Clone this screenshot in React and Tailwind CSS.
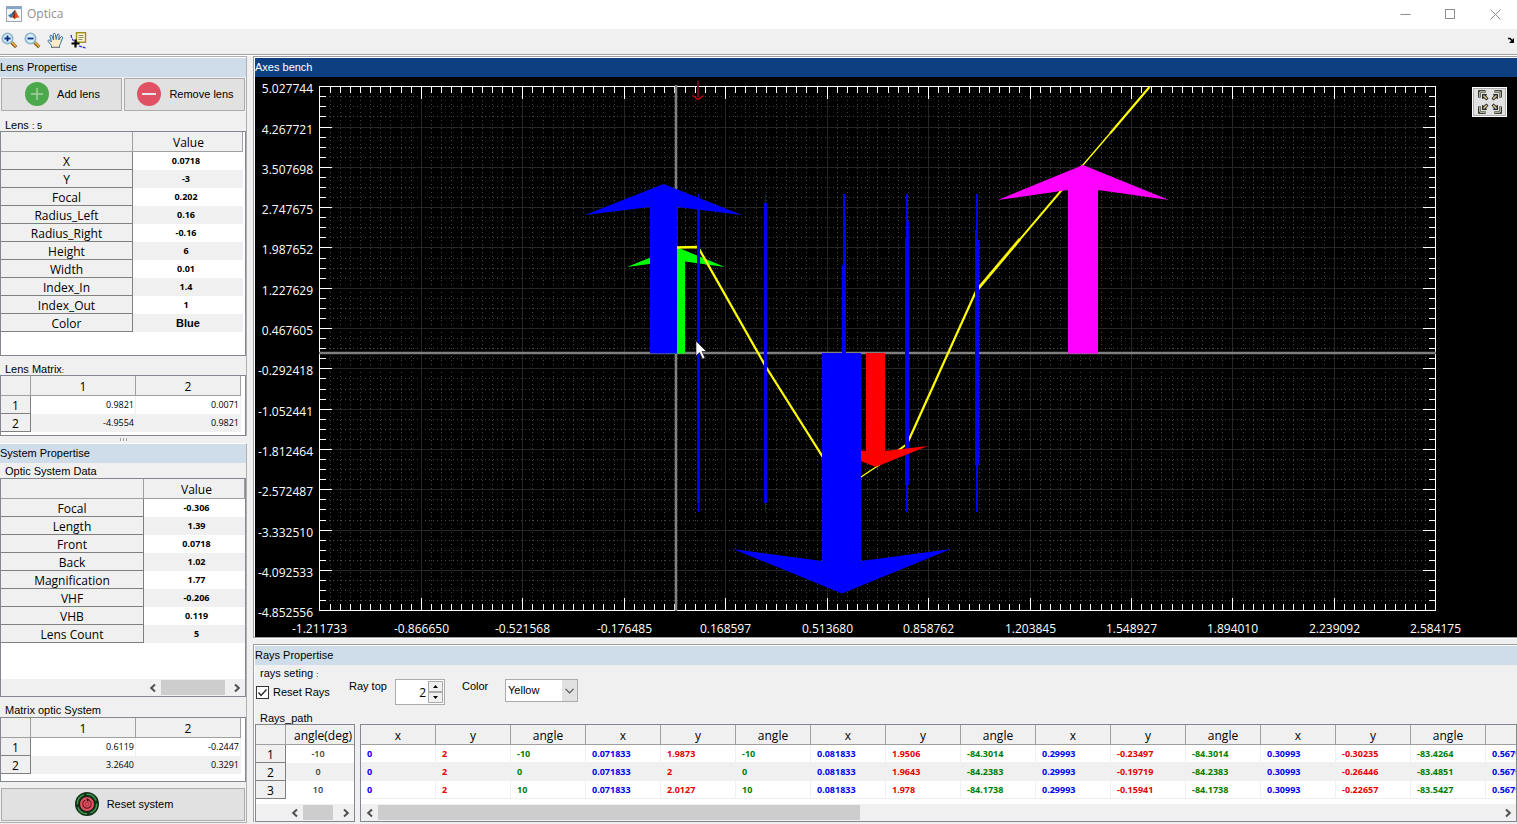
import React, { useState } from "react";

const lensRows = [
  ["X", "0.0718"],
  ["Y", "-3"],
  ["Focal", "0.202"],
  ["Radius_Left", "0.16"],
  ["Radius_Right", "-0.16"],
  ["Height", "6"],
  ["Width", "0.01"],
  ["Index_In", "1.4"],
  ["Index_Out", "1"],
  ["Color", "Blue"],
];

const systemRows = [
  ["Focal", "-0.306"],
  ["Length", "1.39"],
  ["Front", "0.0718"],
  ["Back", "1.02"],
  ["Magnification", "1.77"],
  ["VHF", "-0.206"],
  ["VHB", "0.119"],
  ["Lens Count", "5"],
];

const lensMatrix = [
  ["0.9821", "0.0071"],
  ["-4.9554", "0.9821"],
];

const systemMatrix = [
  ["0.6119", "-0.2447"],
  ["3.2640", "0.3291"],
];

const rayAngles = ["-10", "0", "10"];

const rayRows = [
  ["0", "2", "-10", "0.071833", "1.9873", "-10", "0.081833", "1.9506", "-84.3014", "0.29993", "-0.23497", "-84.3014", "0.30993", "-0.30235", "-83.4264", "0.56799"],
  ["0", "2", "0", "0.071833", "2", "0", "0.081833", "1.9643", "-84.2383", "0.29993", "-0.19719", "-84.2383", "0.30993", "-0.26446", "-83.4851", "0.56799"],
  ["0", "2", "10", "0.071833", "2.0127", "10", "0.081833", "1.978", "-84.1738", "0.29993", "-0.15941", "-84.1738", "0.30993", "-0.22657", "-83.5427", "0.56799"],
];

const rayHeads = ["x", "y", "angle"];
const rayColors = ["text-[#0000f0]", "text-[#e60000]", "text-[#007d00]"];

const yLabels = ["5.027744", "4.267721", "3.507698", "2.747675", "1.987652", "1.227629", "0.467605", "-0.292418", "-1.052441", "-1.812464", "-2.572487", "-3.332510", "-4.092533", "-4.852556"];
const xLabels = ["-1.211733", "-0.866650", "-0.521568", "-0.176485", "0.168597", "0.513680", "0.858762", "1.203845", "1.548927", "1.894010", "2.239092", "2.584175"];

// shared cell styles
const headCell = "h-[20px] border-r border-b border-[#a0a0a0] bg-[#f0f0f0] pt-[2px] pr-0 pb-0 text-[12px] leading-[17px] font-normal";
const rowCell = "h-[18px] border-r border-b border-[#808080] bg-[#f0f0f0] px-0 pt-[2px] pb-0 text-center text-[12px] leading-[15px] font-normal";

const PanelTitle = ({ children, dark }) => (
  <h2
    className={`h-[19px] font-['Liberation_Sans',sans-serif] text-[11px] leading-[19px] ${
      dark ? "bg-[#0e3f81] text-white" : "bg-[#cfddea] text-black"
    }`}
  >
    {children}
  </h2>
);

const Chevron = ({ left }) => (
  <svg viewBox="0 0 8 10" className="h-[10px] w-[8px]" fill="none" stroke="#505050" strokeWidth="2">
    {left ? <path d="M6 1.5 L2.2 5 L6 8.5" /> : <path d="M2 1.5 L5.800 5 L2 8.5" />}
  </svg>
);

const ScrollBar = ({ thumb, name }) => (
  <div className="flex h-[17px] flex-1 items-center bg-[#f0f0f0]">
    <button aria-label={`${name} left`} className="flex h-full w-[17px] items-center justify-center">
      <Chevron left />
    </button>
    <div className="h-[15px] flex-1">
      <div className={`h-full bg-[#cdcdcd] ${thumb}`} />
    </div>
    <button aria-label={`${name} right`} className="flex h-full w-[17px] items-center justify-center">
      <Chevron />
    </button>
  </div>
);

const ValueTable = ({ rows, headWidth, pad, headPad }) => (
  <table className="w-full table-fixed border-separate border-spacing-0">
    <thead>
      <tr>
        <th className={`${headCell} ${headWidth} pl-0`}></th>
        <th className={`${headCell} ${headPad}`}>Value</th>
      </tr>
    </thead>
    <tbody>
      {rows.map(([name, value], i) => (
        <tr key={name} className={i % 2 ? "bg-[#f0f0f0]" : "bg-white"}>
          <th className={rowCell}>{name}</th>
          <td
            className={`h-[18px] py-0 text-center leading-[16px] font-bold ${
              name === "Color" ? "px-0 font-['Liberation_Sans',sans-serif] text-[11px]" : `text-[9px] ${pad}`
            }`}
          >
            {value}
          </td>
        </tr>
      ))}
    </tbody>
  </table>
);

const MatrixTable = ({ rows }) => (
  <table className="w-full table-fixed border-separate border-spacing-0">
    <thead>
      <tr>
        <th className={`${headCell} w-[30px] pl-0`}></th>
        <th className={`${headCell} pl-0`}>1</th>
        <th className={`${headCell} pl-0`}>2</th>
      </tr>
    </thead>
    <tbody>
      {rows.map((row, i) => (
        <tr key={i} className={i % 2 ? "bg-[#f0f0f0]" : "bg-white"}>
          <th className={rowCell}>{i + 1}</th>
          {row.map((v, j) => (
            <td key={j} className="h-[18px] border-r border-[#f0f0f0] py-0 pr-px pl-0 text-right text-[9px] leading-[16px]">
              {v}
            </td>
          ))}
        </tr>
      ))}
    </tbody>
  </table>
);

const TitleBar = () => (
  <header className="flex h-[29px] items-center bg-white pb-px">
    <svg viewBox="0 0 16 16" className="ml-[6px] h-4 w-4">
      <rect x="0.500" y="0.500" width="15" height="15" fill="#f4f6f8" stroke="#9aa7b5" />
      <rect x="1" y="1" width="14" height="2" fill="#7ea6cf" />
      <path d="M2 9.500 L5.500 7.500 L7.500 9.500 L5 12 Z" fill="#3a78a8" />
      <path d="M5.500 7.500 L9 3.800 L9.500 7 L7.500 10 Z" fill="#275274" />
      <path d="M9 3.800 C10.500 6 11.500 9.500 14 12 C12 11 10.500 11.500 8.500 13.500 C8 11.500 6.500 11 5 12 C7.500 10 8.200 6.500 9 3.800 Z" fill="#d9541e" />
      <path d="M9 4.500 C9.200 7 9 10 8.500 13 C7.800 11.500 7 11.300 6.500 11.300 C8 9.500 8.500 7 9 4.500 Z" fill="#7d1f12" />
    </svg>
    <h1 className="ml-[5px] flex-1 text-[12px] leading-[16px] text-[#8f8f8f]">Optica</h1>
    <button aria-label="Minimize" className="flex h-full w-[46px] items-center justify-center">
      <svg viewBox="0 0 11 11" className="h-[11px] w-[11px]" stroke="#8f8f8f" fill="none">
        <path d="M0.500 5.500 H10.500" />
      </svg>
    </button>
    <button aria-label="Maximize" className="flex h-full w-[45px] items-center justify-center">
      <svg viewBox="0 0 11 11" className="h-[11px] w-[11px]" stroke="#8f8f8f" fill="none">
        <rect x="0.500" y="0.500" width="9" height="9" />
      </svg>
    </button>
    <button aria-label="Close" className="flex h-full w-[44px] items-center justify-center">
      <svg viewBox="0 0 11 11" className="h-[11px] w-[11px]" stroke="#8f8f8f" fill="none">
        <path d="M0.500 0.500 L10.500 10.500 M10.500 0.500 L0.500 10.500" />
      </svg>
    </button>
  </header>
);

const Magnifier = ({ plus }) => (
  <svg viewBox="0 0 17 17" className="h-[17px] w-[17px]">
    <path d="M10.500 10.500 L15.200 15.200" stroke="#8a5a14" strokeWidth="3.200" />
    <path d="M10.800 10.300 L15 14.500" stroke="#eab54e" strokeWidth="1.600" />
    <circle cx="6.500" cy="6.500" r="5.200" fill="#d6eefa" stroke="#8fb4cc" strokeWidth="1.600" />
    <path d={plus ? "M3.500 6.500 H9.500 M6.500 3.500 V9.500" : "M3.500 6.500 H9.500"} stroke="#0a2f86" strokeWidth="1.800" />
  </svg>
);

const ToolBar = () => (
  <div className="flex h-[26px] items-center gap-[6px] border-b border-[#a0a0a0] pb-[3px] pl-px">
    <button aria-label="Zoom in">
      <Magnifier plus />
    </button>
    <button aria-label="Zoom out">
      <Magnifier />
    </button>
    <button aria-label="Pan">
      <svg viewBox="0 0 17 17" className="h-[17px] w-[17px]">
        <path
          d="M4.500 15.500 L4.500 13.500 L1.200 9.500 C0.500 8.300 2 7.500 3 8.500 L4.500 10 L3 4.500 C2.700 3 4.500 2.700 5 4 L6.500 8 L6.300 2.500 C6.300 1 8.200 1 8.400 2.400 L9.200 7.500 L10.300 2.800 C10.700 1.500 12.300 1.900 12.200 3.200 L11.800 8 L13.700 5 C14.500 4 16 4.700 15.500 6 L13.500 11.500 L12.500 13.500 L12.500 15.500 Z"
          fill="#fdebc8"
          stroke="#2f6ea5"
        />
        <path d="M5.500 15 H11.500" stroke="#d59b52" />
      </svg>
    </button>
    <button aria-label="Data cursor">
      <svg viewBox="0 0 17 17" className="h-[17px] w-[17px]">
        <path d="M1 3 L1.800 6 L3.500 9 M9 14 L15.500 16" stroke="#2020e0" strokeWidth="1.200" fill="none" strokeDasharray="3 1" />
        <rect x="6.500" y="0.700" width="9" height="9.500" fill="#fffbd0" stroke="#a58a1e" strokeWidth="1.400" />
        <path d="M8.500 3.500 H13.500 M8.500 5.500 H13.500 M8.500 7.500 H12.500" stroke="#8a8a70" />
        <path d="M5.500 7.500 V15.500 M1.500 11.500 H9.500" stroke="#000" strokeWidth="2.200" />
      </svg>
    </button>
    <div className="flex-1" />
    <button aria-label="Dock" className="mr-[2px]">
      <svg viewBox="0 0 8 7" className="h-[7px] w-[8px]">
        <path d="M1 1.500 H3 L6 4.500" stroke="#000" strokeWidth="1.600" fill="none" />
        <path d="M7 1 V6 H2 Z" fill="#000" />
      </svg>
    </button>
  </div>
);

const PushButton = ({ icon, children }) => (
  <button className="flex h-[33px] flex-1 items-center justify-center gap-2 border border-[#adadad] bg-[#e1e1e1] pl-[2px] font-['Liberation_Sans',sans-serif] text-[11px]">
    {icon}
    <span>{children}</span>
  </button>
);

const RoundIcon = ({ color, plus }) => (
  <svg viewBox="0 0 24 24" className="mb-px h-6 w-6">
    <circle cx="12" cy="12" r="12" fill={color} />
    <path d={plus ? "M6 12 H18 M12 6 V18" : "M5 12 H19"} stroke={plus ? "#a5cfa5" : "#e8e8e8"} strokeWidth={plus ? 1.5 : 2} />
  </svg>
);

const ResetIcon = () => (
  <svg viewBox="0 0 24 24" className="mb-px h-6 w-6" fill="none">
    <circle cx="12" cy="12" r="12" fill="#123018" />
    <circle cx="12" cy="12" r="9.700" stroke="#3f9a4c" strokeWidth="1.400" strokeDasharray="12 3" />
    <circle cx="12" cy="12" r="7.500" fill="#e35260" stroke="#0c2412" strokeWidth="1" />
    <circle cx="12" cy="12" r="4.200" stroke="#6d1c28" strokeWidth="1.200" strokeDasharray="22 4" transform="rotate(-60 12 12)" />
    <circle cx="12" cy="12" r="1.800" stroke="#a52a3a" strokeWidth="0.800" />
    <path d="M11.500 6 L14.500 7.800 L12 9.800 Z" fill="#2a0d12" />
  </svg>
);

const tickX = (k) => Math.floor(319.9 + k * 10.145) + 0.5;
const tickY = (k) => Math.floor(86.7 + k * 10.077) + 0.5;

const Bench = () => {
  const xs = Array.from({ length: 111 }, (_, k) => k);
  const ys = Array.from({ length: 53 }, (_, k) => k);
  const xTicks = xs
    .map((k) => {
      const len = k % 10 === 0 ? 12 : 6;
      return `M${tickX(k)} 87 v${len} M${tickX(k)} 610 v-${len}`;
    })
    .join(" ");
  const yTicks = ys
    .map((k) => {
      const len = k % 4 === 0 ? 12 : 6;
      return `M320 ${tickY(k)} h${len} M1435 ${tickY(k)} h-${len}`;
    })
    .join(" ");

  return (
    <svg viewBox="255 77 1262 560" className="block h-auto w-full bg-black" fill="none">
      {/* minor grid */}
      <g stroke="#444444" strokeDasharray="1 3" shapeRendering="crispEdges">
        {xs.filter((k) => k % 10).map((k) => (
          <path key={k} d={`M${tickX(k)} 88 V610`} />
        ))}
        {ys.filter((k) => k % 4).map((k) => (
          <path key={k} d={`M321 ${tickY(k)} H1435`} />
        ))}
      </g>
      {/* major grid */}
      <g stroke="#262626" shapeRendering="crispEdges">
        {xs.filter((k) => k % 10 === 0).map((k) => (
          <path key={k} d={`M${tickX(k)} 87 V610`} />
        ))}
        {ys.filter((k) => k % 4 === 0).map((k) => (
          <path key={k} d={`M320 ${tickY(k)} H1435`} />
        ))}
      </g>
      <g stroke="#fff" shapeRendering="crispEdges">
        <rect x="319.500" y="86.500" width="1116" height="524" />
        <path d={xTicks} />
        <path d={yTicks} />
      </g>
      <path d="M676 85 V611 M319 353 H1436" stroke="#808080" strokeWidth="2.500" />

      {/* object */}
      <path d="M676.500 247 L725 267 L685 261.500 V353.500 H668 V261.500 L627 267 Z" fill="#00ff00" />
      {/* rays */}
      <g stroke="#ffff00" strokeLinejoin="round">
        <path d="M677 247.500 L698 247 L766 367 L843 489" strokeWidth="2.300" />
        <path d="M843 489 L861 477 L876 467" strokeWidth="1.400" />
        <path d="M876 467 L907 444" strokeWidth="2" />
        <path d="M907 444 L977 289" strokeWidth="2.200" />
        <path d="M977 290 L1020 239" stroke="#d8c810" strokeWidth="3" />
        <path d="M977 290 L1083 165" strokeWidth="2" />
        <path d="M1083 165 L1110 133.500" strokeWidth="1.400" />
        <path d="M1110 133.500 L1149.500 87" strokeWidth="2.200" />
      </g>
      {/* lenses */}
      <g fill="#0000f5">
        <path d="M698 194 h1 V203 h1 V503 h-1 V512 h-1 V503 h-1 V203 h1 Z" />
        <path d="M765 194 h1 V203 h1 V503 h-1 V512 h-1 V503 h-1 V203 h1 Z" />
        <path d="M843 194 h2 V216 h1 V512 h-4 V265 h1 Z" />
        <path d="M906 194 h2 V221 h1 V485 h-1 V512 h-2 V485 h-1 V237 h1 Z" />
        <path d="M976 194 h2 V240 h1 V465 h-1 V512 h-2 V465 h-1 V230 h1 Z" />
      </g>
      {/* images */}
      <path d="M663.500 184 L742 215 L677 207 V353.500 H650 V207 L585 215 Z" fill="#0000ff" />
      <path d="M866 353 H885 V451 L928 446 L875.500 467 L825 446 L866 451 Z" fill="#ff0000" />
      <path d="M822 353 H861 V561 L951 549 L842 593.500 L733 549 L822 561 Z" fill="#0000ff" />
      <path d="M1083 165 L1169 200 L1098 190 V353.500 H1068 V190 L998 200 Z" fill="#ff00ff" />
      {/* lens marker */}
      <path d="M698 81 V97" stroke="#7a0020" strokeWidth="2" />
      <path d="M692.500 95.500 L698 99.500 L703.500 95.500" stroke="#d00000" strokeWidth="1.300" />

      <g fill="#fff" className="font-['Open_Sans',sans-serif] text-[12px]">
        {yLabels.map((t, i) => (
          <text key={t} x="313" y={tickY(i * 4) + 6} textAnchor="end">
            {t}
          </text>
        ))}
        {xLabels.map((t, i) => (
          <text key={t} x={tickX(i * 10)} y="633" textAnchor="middle">
            {t}
          </text>
        ))}
      </g>
      <path d="M696 341 V356 L699.500 352.500 L702.500 359 L705 358 L702 351.500 H706.500 Z" fill="#fff" stroke="#000" strokeWidth="0.600" />
    </svg>
  );
};

const FitIcon = () => (
  <svg viewBox="0 0 24 24" className="h-6 w-6" fill="none">
    {[0, 90, 180, 270].map((a) => (
      <g key={a} transform={`rotate(${a} 12 12)`}>
        <path d="M1.500 7.500 V1.500 H7.500" stroke="#111" strokeWidth="2.600" />
        <path d="M1.800 7 V1.800 H7" stroke="#f5f5d0" strokeWidth="1" />
        <path d="M4 4 H9 L8.200 5.800 L10.500 8.500 L8.500 10.500 L5.800 8.200 L4 9 Z" fill="#2b2b2b" />
        <path d="M5.500 5.500 L8.800 8.800" stroke="#e0cf86" strokeWidth="1.500" />
      </g>
    ))}
  </svg>
);

const RaysPanel = () => {
  const [rayTop, setRayTop] = useState(2);
  const [reset, setReset] = useState(true);

  return (
    <section className="border-t border-l border-[#a0a0a0]">
      <div className="border-t border-l border-white">
        <PanelTitle>Rays Propertise</PanelTitle>
        <div className="font-['Liberation_Sans',sans-serif] text-[11px]">
          <p className="h-[14px] pt-px pl-[5px] leading-[15px]">
            rays seting <span className="text-[8px]">:</span>
          </p>
          <div className="flex h-[32px] items-start">
            <label className="mt-[6px] flex w-[94px] items-center gap-1 pl-px leading-[15px]">
              <span className="relative flex">
                <input
                  type="checkbox"
                  checked={reset}
                  onChange={() => setReset(!reset)}
                  className="h-[13px] w-[13px] appearance-none border border-[#333] bg-white"
                />
                {reset && (
                  <svg viewBox="0 0 13 13" className="pointer-events-none absolute inset-0 h-[13px] w-[13px]" fill="none" stroke="#222">
                    <path d="M2.500 6.500 L5 9.500 L10.500 3.500" strokeWidth="1.300" />
                  </svg>
                )}
              </span>
              Reset Rays
            </label>
            <label htmlFor="rayTop" className="w-[46px] leading-[15px]">
              Ray top
            </label>
            <div className="flex h-[26px] w-[50px] border border-[#ababab] bg-white p-px">
              <input
                id="rayTop"
                value={rayTop}
                onChange={(e) => setRayTop(e.target.value)}
                className="min-w-0 flex-1 pt-[2px] pr-[2px] text-right font-['Open_Sans',sans-serif] text-[12px] outline-none"
              />
              <div className="flex w-[15px] flex-col">
                <button aria-label="Increase" onClick={() => setRayTop(Number(rayTop) + 1)} className="flex flex-1 items-center justify-center border border-[#ababab] bg-[#f0f0f0]">
                  <svg viewBox="0 0 5 3" className="h-[3px] w-[5px]">
                    <path d="M0 3 L2.500 0 L5 3 Z" />
                  </svg>
                </button>
                <button aria-label="Decrease" onClick={() => setRayTop(Number(rayTop) - 1)} className="flex flex-1 items-center justify-center border border-[#ababab] bg-[#f0f0f0]">
                  <svg viewBox="0 0 5 3" className="h-[3px] w-[5px]">
                    <path d="M0 0 L2.500 3 L5 0 Z" />
                  </svg>
                </button>
              </div>
            </div>
            <label htmlFor="rayColor" className="ml-[17px] w-[43px] leading-[15px]">
              Color
            </label>
            <div className="relative h-[23px] w-[73px]">
              <select id="rayColor" defaultValue="Yellow" className="h-full w-full appearance-none border border-[#ababab] bg-white pl-[2px] text-[11px] outline-none">
                <option>Yellow</option>
                <option>Red</option>
                <option>Green</option>
              </select>
              <div className="pointer-events-none absolute inset-y-px right-px flex w-[15px] items-center justify-center bg-[#e1e1e1]">
                <svg viewBox="0 0 9 6" className="h-[6px] w-[9px]" fill="none" stroke="#555" strokeWidth="1.200">
                  <path d="M0.500 0.800 L4.500 4.800 L8.500 0.800" />
                </svg>
              </div>
            </div>
          </div>
          <p className="h-[13px] pl-[5px] leading-[15px]">Rays_path</p>
        </div>
        <div className="flex gap-[5px]">
          <div className="flex h-[98px] w-[100px] flex-col border border-[#828790] bg-white">
            <table className="w-full table-fixed border-separate border-spacing-0">
              <thead>
                <tr>
                  <th className={`${headCell} w-[30px] pl-0`}></th>
                  <th className={`${headCell} border-r-0 pl-[6px]`}>angle(deg)</th>
                </tr>
              </thead>
              <tbody>
                {rayAngles.map((a, i) => (
                  <tr key={a} className={i % 2 ? "bg-[#f0f0f0]" : "bg-white"}>
                    <th className={rowCell}>{i + 1}</th>
                    <td className="h-[18px] py-0 pr-1 pl-0 text-center text-[9px] leading-[16px] font-semibold text-[#303838]">{a}</td>
                  </tr>
                ))}
              </tbody>
            </table>
            <div className="mt-auto flex">
              <div className="w-[30px] bg-[#f0f0f0]" />
              <ScrollBar name="Scroll angles" thumb="w-[30px]" />
            </div>
          </div>
          <div className="flex h-[98px] min-w-0 flex-1 flex-col overflow-hidden border border-[#828790] bg-white">
            <table className="w-[1200px] table-fixed border-separate border-spacing-0">
              <thead>
                <tr>
                  {rayRows[0].map((_, j) => (
                    <th key={j} className={`${headCell} pl-0`}>
                      {rayHeads[j % 3]}
                    </th>
                  ))}
                </tr>
              </thead>
              <tbody>
                {rayRows.map((row, i) => (
                  <tr key={i} className={i % 2 ? "bg-[#f0f0f0]" : "bg-white"}>
                    {row.map((v, j) => (
                      <td key={j} className={`h-[18px] border-r border-b border-[#f0f0f0] pt-px pr-0 pb-0 pl-[6px] text-[9px] leading-[16px] font-bold ${rayColors[j % 3]}`}>
                        {v}
                      </td>
                    ))}
                  </tr>
                ))}
              </tbody>
            </table>
            <div className="mt-auto flex">
              <ScrollBar name="Scroll rays" thumb="w-[43%]" />
            </div>
          </div>
        </div>
      </div>
    </section>
  );
};

const App = () => {
  return (
    <div className="min-h-screen overflow-hidden bg-[#f0f0f0] font-['Open_Sans',sans-serif] text-black">
      <TitleBar />
      <ToolBar />
      <div className="flex border-t border-white">
        {/* Left panels */}
        <aside className="w-[247px] flex-none">
          <section className="border-t border-r border-[#b0b0b0]">
            <div className="border-t border-white">
              <PanelTitle>Lens Propertise</PanelTitle>
              <div className="flex gap-[2px] px-px pt-px">
                <PushButton icon={<RoundIcon plus color="#4ba84b" />}>Add lens</PushButton>
                <PushButton icon={<RoundIcon color="#e05263" />}>Remove lens</PushButton>
              </div>
              <p className="h-[20px] pt-[7px] pl-[5px] font-['Liberation_Sans',sans-serif] text-[11px] leading-[15px]">
                Lens <span className="text-[9px]">: 5</span>
              </p>
              <div className="h-[225px] border border-[#828790] bg-white pr-[2px]">
                <ValueTable rows={lensRows} headWidth="w-[132px]" pad="pl-0 pr-1" headPad="pl-[2px]" />
              </div>
              <p className="h-[19px] pt-[6px] pl-[5px] font-['Liberation_Sans',sans-serif] text-[11px] leading-[15px]">
                Lens Matrix<span className="text-[8px]">:</span>
              </p>
              <div className="h-[61px] border border-[#828790] bg-white pr-[4px]">
                <MatrixTable rows={lensMatrix} />
              </div>
            </div>
          </section>
          <div className="flex h-[7px] items-center justify-center gap-[2px]">
            <span className="h-[3px] w-px bg-[#a0a0a0]" />
            <span className="h-[3px] w-px bg-[#a0a0a0]" />
            <span className="h-[3px] w-px bg-[#a0a0a0]" />
          </div>
          <section className="border-t border-r border-t-white border-r-[#b0b0b0]">
            <PanelTitle>System Propertise</PanelTitle>
            <p className="h-[15px] pl-[5px] font-['Liberation_Sans',sans-serif] text-[11px] leading-[17px]">Optic System Data</p>
            <div className="flex h-[219px] flex-col border border-[#828790] bg-white">
              <ValueTable rows={systemRows} headWidth="w-[143px]" pad="pl-1 pr-0" headPad="pl-[5px]" />
              <div className="mt-auto flex">
                <div className="w-[143px] bg-[#f0f0f0]" />
                <ScrollBar name="Scroll system" thumb="w-[64px]" />
              </div>
            </div>
            <p className="h-[20px] pt-[6px] pl-[5px] font-['Liberation_Sans',sans-serif] text-[11px] leading-[15px]">Matrix optic System</p>
            <div className="h-[65px] border border-[#828790] bg-white pr-[4px]">
              <MatrixTable rows={systemMatrix} />
            </div>
            <div className="flex border-b border-[#b0b0b0] px-px pt-[6px] pb-px">
              <PushButton icon={<ResetIcon />}>Reset system</PushButton>
            </div>
          </section>
        </aside>

        {/* Right panels */}
        <main className="ml-[6px] min-w-0 flex-1">
          <section className="border-t border-b border-l border-[#a0a0a0]">
            <div className="border-t border-l border-white">
              <PanelTitle dark>Axes bench</PanelTitle>
              <div className="relative">
                <Bench />
                <button
                  aria-label="Fit to view"
                  className="absolute top-[11px] right-[11px] flex h-[28px] w-[33px] items-center justify-center border border-[#adadad] bg-[#e1e1e1] outline outline-white"
                >
                  <FitIcon />
                </button>
              </div>
            </div>
          </section>
          <div className="h-[6px] border-t border-white" />
          <RaysPanel />
        </main>
      </div>
    </div>
  );
};

export default App;
